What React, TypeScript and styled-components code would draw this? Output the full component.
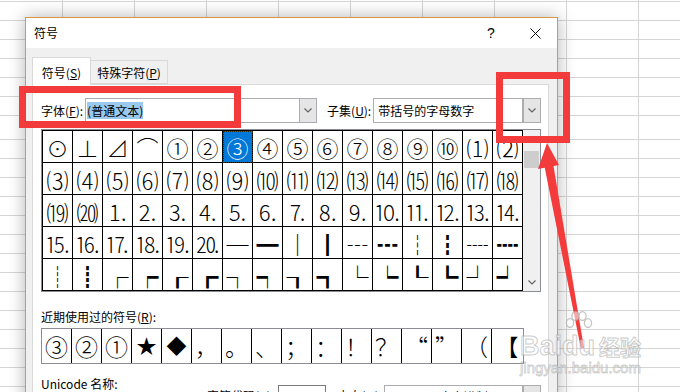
import React from 'react';
import styled, { createGlobalStyle } from 'styled-components';

const GlobalStyle = createGlobalStyle`
  html, body {
    margin: 0;
    padding: 0;
  }
  body {
    font-family: "Noto Sans CJK SC", "Noto Sans", sans-serif;
    color: #000;
  }
`;

const gridRows: string[][] = [
  ['⊙', '⊥', '⊿', '⌒', '①', '②', '③', '④', '⑤', '⑥', '⑦', '⑧', '⑨', '⑩', '⑴', '⑵'],
  ['⑶', '⑷', '⑸', '⑹', '⑺', '⑻', '⑼', '⑽', '⑾', '⑿', '⒀', '⒁', '⒂', '⒃', '⒄', '⒅'],
  ['⒆', '⒇', '⒈', '⒉', '⒊', '⒋', '⒌', '⒍', '⒎', '⒏', '⒐', '⒑', '⒒', '⒓', '⒔', '⒕'],
  ['⒖', '⒗', '⒘', '⒙', '⒚', '⒛', '─', '━', '│', '┃', '┄', '┅', '┆', '┇', '┈', '┉'],
  ['┊', '┋', '┌', '┍', '┎', '┏', '┐', '┑', '┒', '┓', '└', '┕', '┖', '┗', '┘', '┙'],
];

const recentSymbols = ['③', '②', '①', '★', '◆', '，', '。', '、', '；', '：', '！', '？', '“', '”', '（', '【'];

const Chevron = ({ up = false, color = '#606060' }: { up?: boolean; color?: string }) => (
  <svg width="8" height="5" viewBox="0 0 8 5">
    <polyline
      points={up ? '0.5,4.5 4,1 7.5,4.5' : '0.5,0.5 4,4 7.5,0.5'}
      fill="none"
      stroke={color}
      strokeWidth="1.1"
    />
  </svg>
);

export default function App() {
  return (
    <Page>
      <GlobalStyle />
      <Dialog>
        <TitleBar>
          <TitleText>符号</TitleText>
          <TitleSpacer />
          <TitleButton>?</TitleButton>
          <TitleButton>
            <svg width="11" height="11" viewBox="0 0 11 11">
              <path d="M0.5 0.5 L10.5 10.5 M10.5 0.5 L0.5 10.5" stroke="#111" strokeWidth="1" />
            </svg>
          </TitleButton>
        </TitleBar>
        <Body>
          <TabStrip>
            <Tab $active $width={59}>
              符号(<u>S</u>)
            </Tab>
            <Tab $width={78}>
              特殊字符(<u>P</u>)
            </Tab>
          </TabStrip>
          <Panel>
            <FieldRow>
              <Label>
                字体(<u>F</u>):
              </Label>
              <Combo $width={232}>
                <ComboText>
                  <Selected>(普通文本)</Selected>
                </ComboText>
                <DropButton>
                  <Chevron />
                </DropButton>
              </Combo>
              <Label $gapLeft={10}>
                子集(<u>U</u>):
              </Label>
              <Combo $width={168}>
                <ComboText $pad={4}>带括号的字母数字</ComboText>
                <DropButton $boxed>
                  <Chevron />
                </DropButton>
              </Combo>
            </FieldRow>

            <GridFrame>
              <SymbolGrid>
                {gridRows.map((row, r) =>
                  row.map((ch, c) => (
                    <SymbolCell key={`${r}-${c}`} $selected={r === 0 && c === 6}>
                      {ch}
                    </SymbolCell>
                  ))
                )}
              </SymbolGrid>
              <ScrollBar>
                <ScrollArrow>
                  <Chevron up color="#a8a8a8" />
                </ScrollArrow>
                <ScrollThumb />
                <ScrollTrack />
                <ScrollArrow>
                  <Chevron color="#606060" />
                </ScrollArrow>
              </ScrollBar>
            </GridFrame>

            <SectionLabel>
              近期使用过的符号(<u>R</u>):
            </SectionLabel>
            <RecentFrame>
              {recentSymbols.map((ch, i) => (
                <RecentCell key={i} $small={ch === '★' || ch === '◆'}>
                  {ch}
                </RecentCell>
              ))}
            </RecentFrame>

            <BottomRow>
              <UnicodeBlock>Unicode 名称:</UnicodeBlock>
              <CodeControls>
                <Label>
                  字符代码(<u>C</u>):
                </Label>
                <CodeInput>2462</CodeInput>
                <Label $gapLeft={11}>
                  来自(<u>M</u>):
                </Label>
                <Combo $width={157} $height={22}>
                  <ComboText $pad={4}>Unicode(十六进制)</ComboText>
                  <DropButton $boxed>
                    <Chevron />
                  </DropButton>
                </Combo>
              </CodeControls>
            </BottomRow>
          </Panel>
        </Body>
      </Dialog>

      <RedFrame $left={19} $top={86} $width={222} $height={42} $thick={7} />
      <RedFrame $left={496} $top={72} $width={74} $height={71} $thick={7} />

      <ArrowLayer width="680" height="392" viewBox="0 0 680 392">
        <polygon points="547,143 538,169 559,165" fill="#f43b3b" />
        <polygon points="544,164 553,163 584,348 581,349" fill="#f43b3b" />
      </ArrowLayer>

      <Watermark>
        <WatermarkLogo>
          <BrandText>Bai</BrandText>
          <BrandDu>
            <svg width="28" height="24" viewBox="0 0 28 24">
              <g fill="rgba(255,255,255,0.55)" stroke="rgba(170,170,170,0.7)" strokeWidth="1.2">
                <ellipse cx="5" cy="12" rx="3.6" ry="4.4" />
                <ellipse cx="10.5" cy="5" rx="3.6" ry="4.4" />
                <ellipse cx="17.5" cy="5" rx="3.6" ry="4.4" />
                <ellipse cx="23" cy="12" rx="3.6" ry="4.4" />
              </g>
            </svg>
            <BrandText>du</BrandText>
          </BrandDu>
          <BrandCjk>经验</BrandCjk>
        </WatermarkLogo>
        <WatermarkUrl>jingyan.baidu.com</WatermarkUrl>
      </Watermark>
    </Page>
  );
}

const gridLine = '#d5d5d5';

const Page = styled.div`
  position: relative;
  width: 680px;
  height: 392px;
  overflow: hidden;
  box-sizing: border-box;
  padding: 17px 0 0 25px;
  background-color: #fff;
  background-image:
    repeating-linear-gradient(90deg, transparent 0 62px, ${gridLine} 62px 63px, transparent 63px 72px),
    repeating-linear-gradient(180deg, transparent 0 1px, ${gridLine} 1px 2px, transparent 2px 19px),
    repeating-linear-gradient(180deg, transparent 0 9px, ${gridLine} 9px 10px, transparent 10px 19px);
  background-size: 100% 100%, 100% 130px, 100% 262px;
  background-position: 0 0, 0 0, 0 130px;
  background-repeat: no-repeat;
`;

const Dialog = styled.div`
  width: 533px;
  height: 410px;
  box-sizing: border-box;
  border: 1px solid #d99643;
  background: #f0f0f0;
  box-shadow: 0 0 16px rgba(0, 0, 0, 0.3);
  display: flex;
  flex-direction: column;
`;

const TitleBar = styled.div`
  height: 30px;
  flex-shrink: 0;
  background: #fff;
  display: flex;
  align-items: center;
  padding-left: 8px;
`;

const TitleText = styled.div`
  font-size: 12px;
  line-height: 16px;
`;

const TitleSpacer = styled.div`
  flex: 1;
`;

const TitleButton = styled.div`
  width: 44px;
  height: 30px;
  display: flex;
  align-items: center;
  justify-content: center;
  font-family: "Liberation Sans", Arial, sans-serif;
  font-size: 14px;
`;

const Body = styled.div`
  flex: 1;
  display: flex;
  flex-direction: column;
  padding: 9px 8px 0 6px;
`;

const TabStrip = styled.div`
  display: flex;
  align-items: flex-start;
  height: 28px;
  margin-bottom: -1px;
  position: relative;
  z-index: 1;
`;

const Tab = styled.div<{ $active?: boolean; $width: number }>`
  width: ${(p) => p.$width}px;
  height: ${(p) => (p.$active ? 28 : 24)}px;
  margin-top: ${(p) => (p.$active ? 0 : 3)}px;
  margin-left: ${(p) => (p.$active ? 0 : -1)}px;
  box-sizing: border-box;
  border: 1px solid #d9d9d9;
  border-bottom: ${(p) => (p.$active ? 'none' : '1px solid #d9d9d9')};
  background: ${(p) => (p.$active ? '#fff' : '#f0f0f0')};
  position: relative;
  z-index: ${(p) => (p.$active ? 2 : 1)};
  display: flex;
  align-items: center;
  justify-content: center;
  padding-top: ${(p) => (p.$active ? 1 : 0)}px;
  font-size: 12px;
  white-space: nowrap;
`;

const Panel = styled.div`
  flex: 1;
  background: #fff;
  border: 1px solid #d9d9d9;
  padding: 13px 6px 0 8px;
`;

const FieldRow = styled.div`
  display: flex;
  align-items: center;
  height: 25px;
`;

const Label = styled.div<{ $gapLeft?: number }>`
  font-size: 12px;
  line-height: 16px;
  white-space: nowrap;
  margin-left: ${(p) => p.$gapLeft ?? 0}px;
  margin-right: 2px;
`;

const Combo = styled.div<{ $width: number; $height?: number }>`
  width: ${(p) => p.$width}px;
  height: ${(p) => p.$height ?? 25}px;
  box-sizing: border-box;
  border: 1px solid #abadb3;
  background: #fff;
  display: flex;
`;

const ComboText = styled.div<{ $pad?: number }>`
  flex: 1;
  display: flex;
  align-items: center;
  padding-left: ${(p) => p.$pad ?? 1}px;
  font-size: 12px;
  white-space: nowrap;
  overflow: hidden;
`;

const Selected = styled.span`
  background: #99c9ef;
  line-height: 17px;
`;

const DropButton = styled.div<{ $boxed?: boolean }>`
  width: 17px;
  box-sizing: border-box;
  background: #e5e5e5;
  border-left: 1px solid #adadad;
  outline: ${(p) => (p.$boxed ? '1px solid #adadad' : 'none')};
  display: flex;
  align-items: center;
  justify-content: center;
`;

const GridFrame = styled.div`
  margin-top: 6px;
  width: 500px;
  box-sizing: border-box;
  border: 1px solid #8a8d94;
  display: flex;
`;

const SymbolGrid = styled.div`
  display: grid;
  grid-template-columns: repeat(16, 30px);
  grid-auto-rows: 32px;
  border-top: 1px solid #000;
  border-left: 1px solid #000;
`;

const SymbolCell = styled.div<{ $selected?: boolean }>`
  box-sizing: border-box;
  border-right: 1px solid #000;
  border-bottom: 1px solid #000;
  display: flex;
  align-items: center;
  justify-content: center;
  font-family: "Noto Sans CJK SC", "DejaVu Sans", sans-serif;
  font-size: 22px;
  font-weight: 300;
  line-height: 1;
  overflow: hidden;
  background: ${(p) => (p.$selected ? '#0078d7' : '#fff')};
  color: ${(p) => (p.$selected ? '#fff' : '#000')};
  outline: ${(p) => (p.$selected ? '1px dotted #3a2a10' : 'none')};
  outline-offset: -1px;
`;

const ScrollBar = styled.div`
  width: 17px;
  background: #f0f0f0;
  display: flex;
  flex-direction: column;
  align-items: center;
`;

const ScrollArrow = styled.div`
  height: 17px;
  width: 17px;
  display: flex;
  align-items: center;
  justify-content: center;
`;

const ScrollThumb = styled.div`
  margin-top: 4px;
  width: 15px;
  height: 17px;
  background: #cdcdcd;
`;

const ScrollTrack = styled.div`
  flex: 1;
`;

const SectionLabel = styled.div`
  margin-top: 17px;
  font-size: 12px;
  line-height: 16px;
`;

const RecentFrame = styled.div`
  margin-top: 3px;
  width: 483px;
  height: 36px;
  box-sizing: border-box;
  border: 1px solid #8a8d94;
  display: flex;
  background: #fff;
`;

const RecentCell = styled.div<{ $small?: boolean }>`
  width: 30px;
  flex-shrink: 0;
  box-sizing: border-box;
  border-right: 1px solid #000;
  display: flex;
  align-items: center;
  justify-content: center;
  font-family: "Noto Sans CJK SC", "DejaVu Sans", sans-serif;
  font-size: ${(p) => (p.$small ? 20 : 23)}px;
  font-weight: 300;
  line-height: 1;
  overflow: hidden;

  &:last-child {
    border-right: none;
  }
`;

const BottomRow = styled.div`
  margin-top: 12px;
  display: flex;
  align-items: flex-start;
`;

const UnicodeBlock = styled.div`
  width: 166px;
  font-size: 12px;
  line-height: 16px;
`;

const CodeControls = styled.div`
  margin-top: 9px;
  display: flex;
  align-items: center;
`;

const CodeInput = styled.div`
  width: 48px;
  height: 22px;
  box-sizing: border-box;
  border: 1px solid #7a7a7a;
  margin-left: 2px;
  padding-left: 4px;
  display: flex;
  align-items: center;
  font-size: 12px;
`;

const RedFrame = styled.div<{ $left: number; $top: number; $width: number; $height: number; $thick: number }>`
  position: absolute;
  left: ${(p) => p.$left}px;
  top: ${(p) => p.$top}px;
  width: ${(p) => p.$width}px;
  height: ${(p) => p.$height}px;
  box-sizing: border-box;
  border: ${(p) => p.$thick}px solid #f43b3b;
  pointer-events: none;
`;

const ArrowLayer = styled.svg`
  position: absolute;
  left: 0;
  top: 0;
  pointer-events: none;
`;

const Watermark = styled.div`
  position: absolute;
  left: 520px;
  top: 311px;
  display: flex;
  flex-direction: column;
  pointer-events: none;
`;

const WatermarkLogo = styled.div`
  display: flex;
  align-items: flex-end;
`;

const BrandText = styled.span`
  font-family: "Liberation Sans", Arial, sans-serif;
  font-weight: bold;
  font-size: 27px;
  line-height: 22px;
  color: rgba(255, 255, 255, 0.55);
  -webkit-text-stroke: 1px rgba(160, 160, 160, 0.55);
`;

const BrandDu = styled.div`
  display: flex;
  flex-direction: column;
  align-items: center;
`;

const BrandCjk = styled.span`
  margin-left: 4px;
  font-family: "Noto Sans CJK SC", sans-serif;
  font-weight: bold;
  font-size: 21px;
  line-height: 22px;
  color: rgba(255, 255, 255, 0.55);
  -webkit-text-stroke: 1px rgba(160, 160, 160, 0.55);
`;

const WatermarkUrl = styled.div`
  margin-top: 3px;
  font-family: "Liberation Sans", Arial, sans-serif;
  font-size: 15px;
  line-height: 16px;
  color: rgba(255, 255, 255, 0.55);
  -webkit-text-stroke: 0.8px rgba(160, 160, 160, 0.55);
`;
